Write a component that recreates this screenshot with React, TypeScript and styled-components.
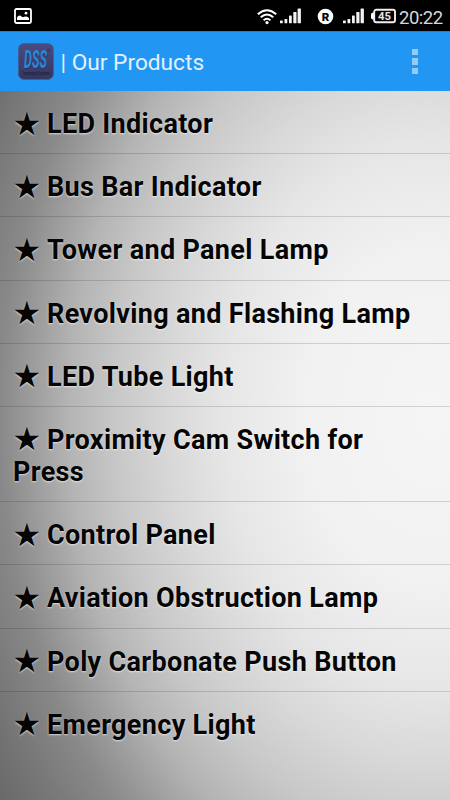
import React from "react";
import styled, { createGlobalStyle } from "styled-components";

const GlobalStyle = createGlobalStyle`
  * { box-sizing: border-box; }
  html, body { margin: 0; padding: 0; background: #000; }
  body { font-family: Roboto, "Liberation Sans", sans-serif; }
`;

const Screen = styled.div`
  width: 450px;
  height: 800px;
  display: flex;
  flex-direction: column;
  overflow: hidden;
`;

const StatusBar = styled.header`
  flex: none;
  height: 31px;
  padding: 1px 6px 0 14px;
  display: flex;
  align-items: center;
  background: #000;
  color: #d8d8d8;
`;

const StatusIcon = styled.svg<{ $gap?: number }>`
  display: block;
  flex: none;
  margin-left: ${(p) => p.$gap ?? 0}px;
`;

const Spacer = styled.div`
  flex: 1;
`;

const Clock = styled.span`
  width: 45px;
  margin-left: 3px;
  padding-top: 3px;
  font-size: 18.5px;
  line-height: 24px;
  letter-spacing: -0.5px;
  white-space: nowrap;
`;

const AppBar = styled.div`
  flex: none;
  height: 60px;
  padding: 0 31px 0 17.5px;
  display: flex;
  align-items: center;
  background: #2196f3;
  border-top: 1px solid #1c80d0;
`;

const Title = styled.h1`
  margin: 0 0 0 7px;
  padding-top: 2px;
  flex: 1;
  font-size: 22.7px;
  line-height: 30px;
  font-weight: 400;
  color: #e2f0fd;
  white-space: nowrap;
`;

const MenuButton = styled.button`
  width: 7px;
  padding: 0;
  border: 0;
  background: none;
  display: flex;
  flex-direction: column;
  gap: 3px;
`;

const MenuDot = styled.span`
  width: 6px;
  height: 6.5px;
  background: #92caf8;
`;

const Products = styled.ul`
  flex: 1;
  margin: 0;
  padding: 0;
  list-style: none;
  background: radial-gradient(
    ellipse 430px 570px at 430px 325px,
    #f5f5f5 0%,
    #f1f1f1 30%,
    #e6e6e6 48%,
    #d9d9d9 60%,
    #c8c8c8 73%,
    #b4b4b4 84%,
    #999 94%,
    #898989 100%,
    #727272 114%,
    #646464 125%
  );
`;

const Product = styled.li`
  padding: 17px 24px 13.1px 13px;
  font-size: 27px;
  line-height: 32.1px;
  letter-spacing: 0.33px;
  font-weight: 700;
  color: #050505;
  text-shadow: 0 1px 2px rgba(255, 255, 255, 0.65);
  border-bottom: 1px solid rgba(0, 0, 0, 0.14);

  &:last-child { border-bottom: 0; }
`;

const Star = styled.span`
  display: inline-block;
  width: 34px;
  font-family: "DejaVu Sans", sans-serif;
  font-weight: 400;
  font-size: 32px;
  line-height: 24px;
  text-indent: -0.6px;
  vertical-align: -1.5px;
`;

const Wordmark = styled.text`
  font: italic 700 25.5px Roboto, sans-serif;
  fill: #2c84d8;
  text-shadow: 0.8px 0.8px 0 #263260;
`;

const products = [
  "LED Indicator",
  "Bus Bar Indicator",
  "Tower and Panel Lamp",
  "Revolving and Flashing Lamp",
  "LED Tube Light",
  "Proximity Cam Switch for Press",
  "Control Panel",
  "Aviation Obstruction Lamp",
  "Poly Carbonate Push Button",
  "Emergency Light",
];

const PictureIcon = () => (
  <StatusIcon width="18" height="16" viewBox="0 0 18 16">
    <rect x="1" y="1" width="16" height="14" rx="1.5" fill="none" stroke="#fff" strokeWidth="1.8" />
    <path d="M3 12V9.5Q5 6 7.5 8.5L9 9.3Q12 7.5 15 10V12Z" fill="#fff" />
    <circle cx="12" cy="5.2" r="1.4" fill="#fff" />
  </StatusIcon>
);

const WifiIcon = () => (
  <StatusIcon width="20" height="17" viewBox="0 0 20 17" fill="none" stroke="#fff" strokeWidth="2">
    <path d="M.8 6.2Q10-1.8 19.2 6.2" />
    <path d="M3.7 9.3Q10 3.7 16.3 9.3" />
    <path d="M6.6 12.2Q10 9.3 13.4 12.2" />
    <circle cx="10" cy="14.6" r="1.6" fill="#fff" stroke="none" />
  </StatusIcon>
);

const SignalIcon = ({ gap }: { gap: number }) => (
  <StatusIcon $gap={gap} width="21" height="16" viewBox="0 0 21 16" fill="#f2f2f2">
    <rect x="0" y="12.5" width="2.8" height="2.8" rx=".6" />
    <rect x="4.5" y="11" width="2.8" height="4.3" rx=".6" />
    <rect x="9" y="7.5" width="2.8" height="7.8" rx=".6" />
    <rect x="13.3" y="4" width="3.2" height="11.3" rx=".6" />
    <rect x="17.6" y="0.6" width="3.3" height="14.7" rx=".6" />
  </StatusIcon>
);

const RoamingIcon = () => (
  <StatusIcon $gap={16} width="17" height="17" viewBox="0 0 17 17">
    <circle cx="8.5" cy="8.5" r="7.8" fill="#fff" />
    <text x="8.6" y="12.7" textAnchor="middle" fontFamily="Roboto" fontWeight="900" fontSize="11.5">R</text>
  </StatusIcon>
);

const BatteryIcon = () => (
  <StatusIcon $gap={7} width="25" height="16" viewBox="0 0 25 16">
    <path d="M0 6.5Q0 4.5 3 4.5V11.5Q0 11.5 0 9.5Z" fill="#fff" />
    <rect x="3.2" y="1.8" width="20.8" height="12.5" rx="2" fill="none" stroke="#eee" strokeWidth="1.9" />
    <text x="13.5" y="11.7" textAnchor="middle" fontFamily="Roboto" fontWeight="700" fontSize="10.5" textLength="13" lengthAdjust="spacingAndGlyphs" fill="#e6e6e6">45</text>
  </StatusIcon>
);

const Logo = () => (
  <svg width="36" height="37" viewBox="0 0 36 37">
    <defs>
      <linearGradient id="tile" x2="0" y2="1">
        <stop stopColor="#4b4b80" />
        <stop offset="1" stopColor="#35365e" />
      </linearGradient>
    </defs>
    <rect x=".4" y=".6" width="35" height="35.8" rx="5.5" fill="url(#tile)" stroke="#405d94" strokeWidth=".7" />
    <Wordmark x="6" y="25.4" textLength="23" lengthAdjust="spacingAndGlyphs">DSS</Wordmark>
    <text x="29" y="9" fontFamily="Roboto" fontSize="4" fill="#20213c">®</text>
    <text x="4.5" y="31.5" fontFamily="Roboto" fontSize="5" textLength="27" lengthAdjust="spacingAndGlyphs" fill="#15182f">Transportations &amp; Equipments</text>
  </svg>
);

export default function App() {
  return (
    <>
      <GlobalStyle />
      <Screen>
        <StatusBar>
          <PictureIcon />
          <Spacer />
          <WifiIcon />
          <SignalIcon gap={3} />
          <RoamingIcon />
          <SignalIcon gap={9} />
          <BatteryIcon />
          <Clock>20:22</Clock>
        </StatusBar>
        <AppBar>
          <Logo />
          <Title>| Our Products</Title>
          <MenuButton aria-label="More options">
            <MenuDot />
            <MenuDot />
            <MenuDot />
          </MenuButton>
        </AppBar>
        <Products>
          {products.map((name) => (
            <Product key={name}>
              <Star>★</Star>
              {name}
            </Product>
          ))}
        </Products>
      </Screen>
    </>
  );
}
